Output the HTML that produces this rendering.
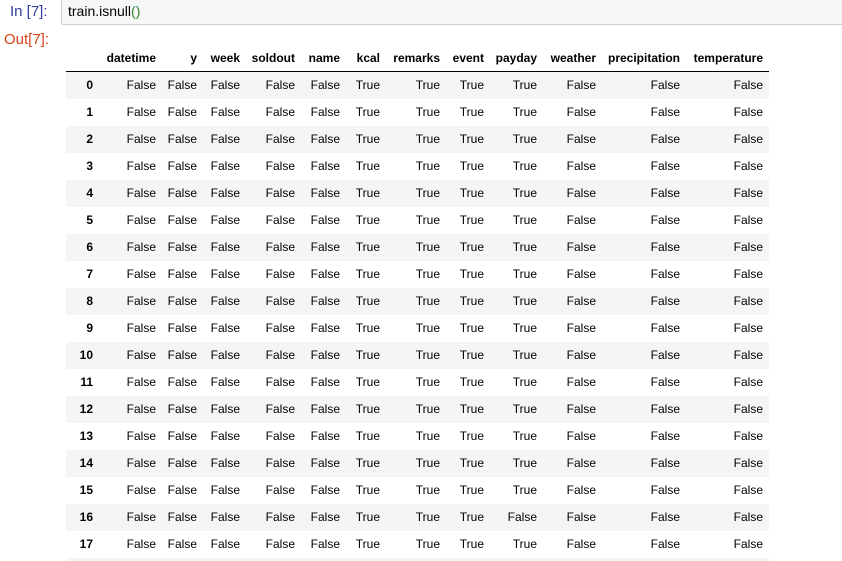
<!DOCTYPE html>
<html><head><meta charset="utf-8"><style>
html,body{margin:0;width:842px;height:561px;overflow:hidden;background:#fff}
body{font-family:"Liberation Sans",sans-serif;position:relative}
.pin{position:absolute;left:10px;top:3px;font-size:15px;color:#303f9f}
.pout{position:absolute;left:4px;top:31px;font-size:15px;color:#d84315}
.box{position:absolute;left:61px;top:-2px;width:790px;height:27px;background:#f7f7f7;border:1px solid #cfcfcf;border-radius:2px;box-sizing:border-box}
.code{position:absolute;left:68px;top:3px;font-size:14px;color:#000}
.g{color:#2e7d32}
table{position:absolute;left:66px;top:44px;border-collapse:collapse;table-layout:fixed;font-size:12px;color:#000}
th,td{padding:0 6px 0 0;text-align:right;height:27px;line-height:27px;white-space:nowrap}
thead th{height:27px;border-bottom:1px solid #000;vertical-align:middle;line-height:26px}
tbody tr:nth-child(odd){background:#f5f5f5}
tbody th{padding-right:6px}
tr.last th,tr.last td{height:3px;line-height:3px}
</style></head><body>
<div class="pin">In [7]:</div>
<div class="box"></div>
<div class="code">train.isnull<span class="g">()</span></div>
<div class="pout">Out[7]:</div>
<table>
<colgroup><col style="width:33px"><col style="width:63px"><col style="width:41px"><col style="width:43px"><col style="width:55px"><col style="width:45px"><col style="width:40px"><col style="width:60px"><col style="width:44px"><col style="width:53px"><col style="width:59px"><col style="width:84px"><col style="width:83px"></colgroup>
<thead><tr><th></th><th>datetime</th><th>y</th><th>week</th><th>soldout</th><th>name</th><th>kcal</th><th>remarks</th><th>event</th><th>payday</th><th>weather</th><th>precipitation</th><th>temperature</th></tr></thead>
<tbody>
<tr><th>0</th><td>False</td><td>False</td><td>False</td><td>False</td><td>False</td><td>True</td><td>True</td><td>True</td><td>True</td><td>False</td><td>False</td><td>False</td></tr>
<tr><th>1</th><td>False</td><td>False</td><td>False</td><td>False</td><td>False</td><td>True</td><td>True</td><td>True</td><td>True</td><td>False</td><td>False</td><td>False</td></tr>
<tr><th>2</th><td>False</td><td>False</td><td>False</td><td>False</td><td>False</td><td>True</td><td>True</td><td>True</td><td>True</td><td>False</td><td>False</td><td>False</td></tr>
<tr><th>3</th><td>False</td><td>False</td><td>False</td><td>False</td><td>False</td><td>True</td><td>True</td><td>True</td><td>True</td><td>False</td><td>False</td><td>False</td></tr>
<tr><th>4</th><td>False</td><td>False</td><td>False</td><td>False</td><td>False</td><td>True</td><td>True</td><td>True</td><td>True</td><td>False</td><td>False</td><td>False</td></tr>
<tr><th>5</th><td>False</td><td>False</td><td>False</td><td>False</td><td>False</td><td>True</td><td>True</td><td>True</td><td>True</td><td>False</td><td>False</td><td>False</td></tr>
<tr><th>6</th><td>False</td><td>False</td><td>False</td><td>False</td><td>False</td><td>True</td><td>True</td><td>True</td><td>True</td><td>False</td><td>False</td><td>False</td></tr>
<tr><th>7</th><td>False</td><td>False</td><td>False</td><td>False</td><td>False</td><td>True</td><td>True</td><td>True</td><td>True</td><td>False</td><td>False</td><td>False</td></tr>
<tr><th>8</th><td>False</td><td>False</td><td>False</td><td>False</td><td>False</td><td>True</td><td>True</td><td>True</td><td>True</td><td>False</td><td>False</td><td>False</td></tr>
<tr><th>9</th><td>False</td><td>False</td><td>False</td><td>False</td><td>False</td><td>True</td><td>True</td><td>True</td><td>True</td><td>False</td><td>False</td><td>False</td></tr>
<tr><th>10</th><td>False</td><td>False</td><td>False</td><td>False</td><td>False</td><td>True</td><td>True</td><td>True</td><td>True</td><td>False</td><td>False</td><td>False</td></tr>
<tr><th>11</th><td>False</td><td>False</td><td>False</td><td>False</td><td>False</td><td>True</td><td>True</td><td>True</td><td>True</td><td>False</td><td>False</td><td>False</td></tr>
<tr><th>12</th><td>False</td><td>False</td><td>False</td><td>False</td><td>False</td><td>True</td><td>True</td><td>True</td><td>True</td><td>False</td><td>False</td><td>False</td></tr>
<tr><th>13</th><td>False</td><td>False</td><td>False</td><td>False</td><td>False</td><td>True</td><td>True</td><td>True</td><td>True</td><td>False</td><td>False</td><td>False</td></tr>
<tr><th>14</th><td>False</td><td>False</td><td>False</td><td>False</td><td>False</td><td>True</td><td>True</td><td>True</td><td>True</td><td>False</td><td>False</td><td>False</td></tr>
<tr><th>15</th><td>False</td><td>False</td><td>False</td><td>False</td><td>False</td><td>True</td><td>True</td><td>True</td><td>True</td><td>False</td><td>False</td><td>False</td></tr>
<tr><th>16</th><td>False</td><td>False</td><td>False</td><td>False</td><td>False</td><td>True</td><td>True</td><td>True</td><td>False</td><td>False</td><td>False</td><td>False</td></tr>
<tr><th>17</th><td>False</td><td>False</td><td>False</td><td>False</td><td>False</td><td>True</td><td>True</td><td>True</td><td>True</td><td>False</td><td>False</td><td>False</td></tr>
<tr class="last"><th></th><td></td><td></td><td></td><td></td><td></td><td></td><td></td><td></td><td></td><td></td><td></td><td></td></tr>
</tbody></table>
</body></html>
